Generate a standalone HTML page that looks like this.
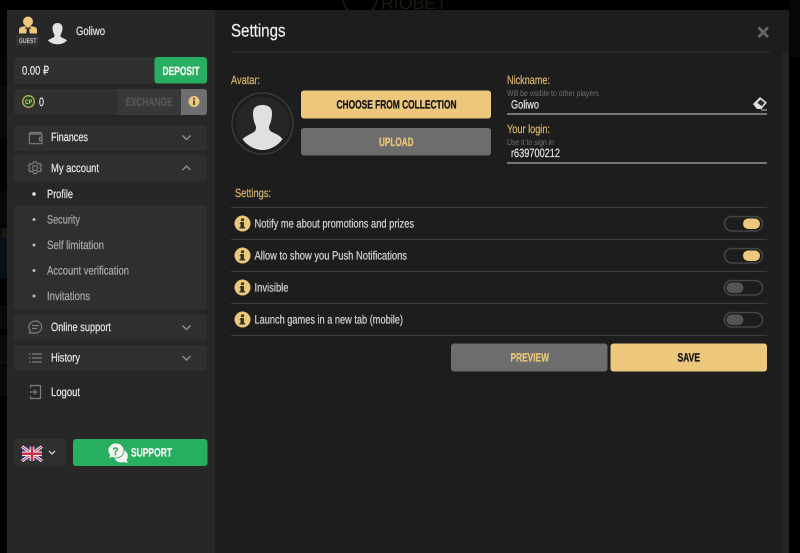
<!DOCTYPE html>
<html><head><meta charset="utf-8"><title>Settings</title>
<style>
html,body{margin:0;padding:0;background:#000;width:800px;height:553px;overflow:hidden}
svg{display:block;position:absolute;left:0;top:0}
text{font-family:"Liberation Sans",sans-serif;font-size:12px;text-rendering:geometricPrecision;stroke-width:.22px}
.m{fill:#e4e4e4;stroke:#e4e4e4;font-size:12px}
.b{font-weight:700;stroke-width:.3px}
.g{fill:#d9b56c;stroke:#d9b56c}
.s{fill:#707070;font-size:8.5px}
.l{fill:#a8a8a8;stroke:#a8a8a8;font-size:12px}
.r{fill:#d4d4d4;stroke:#d4d4d4;font-size:12px}
</style></head><body>
<svg width="800" height="553" viewBox="0 0 800 553" xmlns="http://www.w3.org/2000/svg">
<rect width="800" height="553" fill="#000"/>
<!-- dim background -->
<rect x="0" y="57" width="7" height="25" fill="#050505"/>
<rect x="0" y="85" width="7" height="52" fill="#070707"/>
<rect x="0" y="188" width="7" height="40" fill="#060606"/>
<rect x="0" y="228" width="7" height="50" fill="#07101a"/>
<rect x="2" y="228" width="5" height="10" fill="#1a170c"/>
<rect x="0" y="305" width="7" height="24" fill="#090909"/>
<rect x="0" y="335" width="7" height="30" fill="#0b0b0b"/>
<rect x="0" y="366" width="7" height="30" fill="#080808"/>
<rect x="789" y="0" width="11" height="57" fill="#070707"/>
<g fill="none" stroke="#14201a" stroke-width="1.500"><circle cx="360" cy="-2" r="17"/></g>
<text x="381" y="9" style="font-size:17px;stroke:none" fill="#1d1a10" textLength="66" lengthAdjust="spacingAndGlyphs">RIOBET</text>

<!-- panel -->
<rect x="7" y="10" width="208" height="543" fill="#272727"/>
<rect x="215" y="10" width="574" height="543" fill="#1d1d1d"/>
<rect x="782" y="52" width="7" height="501" fill="#232323"/>

<!-- guest icon -->
<circle cx="28" cy="21.500" r="5" fill="#ecc77c"/>
<path d="M19 33.500v-4c0-1.800 2-2.700 5.500-3.200h7c3.500.5 5.500 1.400 5.500 3.200v4z" fill="#ecc77c"/>
<path d="M25.500 26.800l2.500 1.200 2.500-1.200v2.600l-1.500-.6.7 4.700h-3.400l.7-4.700-1.500.6z" fill="#272727"/>
<rect x="16" y="35" width="23" height="11" rx="2" fill="#333"/>
<text x="19" y="43" style="font-size:7px;font-weight:700;stroke:none" fill="#c4c4c4" textLength="17.500" lengthAdjust="spacingAndGlyphs">GUEST</text>
<!-- avatar small -->
<path d="M57.500 23c3.300 0 5 2.300 5 5 0 2.500-.8 5-1.800 6.500-.5 1.300-.2 2.400 1 3 2 1 4 1.500 5.300 3-2.300 2.500-5.800 3.800-9.500 3.800s-7.200-1.300-9.500-3.800c1.300-1.500 3.300-2 5.300-3 1.200-.6 1.500-1.700 1-3-1-1.500-1.800-4-1.800-6.500 0-2.700 1.700-5 5-5z" fill="#e2e2e2"/>
<text x="76" y="35" class="m" textLength="29" lengthAdjust="spacingAndGlyphs">Goliwo</text>

<!-- balance -->
<rect x="14" y="57" width="193" height="26.500" rx="3" fill="#303030"/>
<path d="M157.500 57H204a3 3 0 0 1 3 3v20.500a3 3 0 0 1-3 3h-46.500a3 3 0 0 1-3-3V60a3 3 0 0 1 3-3z" fill="#27ae60"/>
<text x="22" y="74.500" class="m" textLength="27" lengthAdjust="spacingAndGlyphs">0.00 ₽</text>
<text x="162.500" y="75" class="b" fill="#f2f2f2" stroke="#f2f2f2" textLength="37" lengthAdjust="spacingAndGlyphs">DEPOSIT</text>

<!-- cp -->
<rect x="14" y="89" width="193" height="26" rx="3" fill="#303030"/>
<circle cx="28.500" cy="101.500" r="5.800" fill="#1c4a22" stroke="#c9a95a" stroke-width="1.300"/>
<text x="25" y="104" style="font-size:6.500px;font-weight:700;stroke:none" fill="#e6d27a" textLength="7" lengthAdjust="spacingAndGlyphs">CP</text>
<text x="39" y="106" class="m" textLength="5" lengthAdjust="spacingAndGlyphs">0</text>
<rect x="117.500" y="89" width="64" height="26" rx="2" fill="#383838"/>
<text x="125.500" y="106" class="b" fill="#565656" stroke="#565656" textLength="47" lengthAdjust="spacingAndGlyphs">EXCHANGE</text>
<path d="M181 89h23a3 3 0 0 1 3 3v20a3 3 0 0 1-3 3h-23z" fill="#6e6e6e"/>
<circle cx="194" cy="101.500" r="5.500" fill="#ecc77c"/>
<rect x="193" y="100.500" width="2" height="4.500" fill="#5a5040"/><rect x="193" y="97.800" width="2" height="1.800" fill="#5a5040"/>

<!-- Finances -->
<rect x="14" y="125" width="193" height="26" rx="3" fill="#2f2f2f"/>
<g fill="none" stroke="#7c7c7c" stroke-width="1.200">
<path d="M41 134v-1.500H31c-1 0-1.700.7-1.700 1.700V142c0 1 .7 1.700 1.700 1.700h10c.6 0 1-.4 1-1v-8c0-.4-.4-.7-1-.7H30"/>
<path d="M42 137.500h-2.500v3H42"/>
</g>
<text x="51" y="141" class="m" textLength="37" lengthAdjust="spacingAndGlyphs">Finances</text>
<path d="M182.500 135.500l4 4 4-4" fill="none" stroke="#8c8c8c" stroke-width="1.500"/>

<!-- My account -->
<rect x="14" y="155" width="193" height="26" rx="3" fill="#2f2f2f"/>
<g fill="none" stroke="#7c7c7c" stroke-width="1.200">
<circle cx="35" cy="168" r="2.500"/>
<path d="M33.600 161.800h2.800l.5 1.700 1.500.7 1.600-.8 1.500 2.300-1.300 1.100v1.600l1.300 1.200-1.500 2.300-1.600-.8-1.500.7-.5 1.800h-2.800l-.5-1.800-1.500-.7-1.600.8-1.500-2.300 1.300-1.200v-1.600l-1.300-1.100 1.500-2.300 1.600.8 1.500-.7z"/>
</g>
<text x="51" y="172" class="m" textLength="48" lengthAdjust="spacingAndGlyphs">My account</text>
<path d="M182.500 170l4-4 4 4" fill="none" stroke="#8c8c8c" stroke-width="1.500"/>

<!-- Profile -->
<circle cx="34" cy="194" r="1.700" fill="#f0f0f0"/>
<text x="47" y="198" class="m" textLength="26" lengthAdjust="spacingAndGlyphs">Profile</text>

<!-- sub -->
<rect x="14" y="205" width="193" height="104.500" rx="3" fill="#2f2f2f"/>
<g fill="#bdbdbd">
<circle cx="34" cy="219.500" r="1.500"/><circle cx="34" cy="245" r="1.500"/><circle cx="34" cy="270.500" r="1.500"/><circle cx="34" cy="296" r="1.500"/>
</g>
<text x="47" y="223.500" class="l" textLength="33" lengthAdjust="spacingAndGlyphs">Security</text>
<text x="47" y="249" class="l" textLength="57" lengthAdjust="spacingAndGlyphs">Self limitation</text>
<text x="47" y="274.500" class="l" textLength="82" lengthAdjust="spacingAndGlyphs">Account verification</text>
<text x="47" y="300" class="l" textLength="43" lengthAdjust="spacingAndGlyphs">Invitations</text>

<!-- Online support -->
<rect x="14" y="314.500" width="193" height="26" rx="3" fill="#2f2f2f"/>
<g fill="none" stroke="#7c7c7c" stroke-width="1.200">
<path d="M35.500 321c3.500 0 6.200 2.700 6.200 6s-2.700 6-6.200 6h-6.200l1.200-2.200c-1.200-1-1.700-2.400-1.700-3.800 0-3.300 3.200-6 6.700-6z"/>
<path d="M32 325.500h7M32 328.500h5"/>
</g>
<text x="51" y="331" class="m" textLength="60" lengthAdjust="spacingAndGlyphs">Online support</text>
<path d="M182.500 325.500l4 4 4-4" fill="none" stroke="#8c8c8c" stroke-width="1.500"/>

<!-- History -->
<rect x="14" y="345" width="193" height="26" rx="3" fill="#2f2f2f"/>
<g fill="none" stroke="#7c7c7c" stroke-width="1.200">
<path d="M32 354h10M32 358h10M32 362h10M29 354h1.500M29 358h1.500M29 362h1.500"/>
</g>
<text x="51" y="361.500" class="m" textLength="29" lengthAdjust="spacingAndGlyphs">History</text>
<path d="M182.500 356l4 4 4-4" fill="none" stroke="#8c8c8c" stroke-width="1.500"/>

<!-- Logout -->
<g fill="none" stroke="#7c7c7c" stroke-width="1.200">
<path d="M30.500 388v-2.500h10v13h-10V396"/>
<path d="M30 392h6.500M34 389.500l2.500 2.500-2.500 2.500"/>
</g>
<text x="51" y="396" class="m" textLength="29" lengthAdjust="spacingAndGlyphs">Logout</text>

<!-- Language -->
<rect x="14" y="439" width="52.500" height="27" rx="3" fill="#2f2f2f"/>
<g>
<rect x="22" y="446.500" width="20" height="14.500" fill="#2a3a78"/>
<path d="M22 446.500l20 14.500M42 446.500l-20 14.500" stroke="#f0e6e6" stroke-width="3"/>
<path d="M22 446.500l20 14.500M42 446.500l-20 14.500" stroke="#c8324a" stroke-width="1"/>
<path d="M32 446.500v14.500M22 453.750h20" stroke="#f0e6e6" stroke-width="4.500"/>
<path d="M32 446.500v14.500M22 453.750h20" stroke="#c8324a" stroke-width="2.500"/>
</g>
<path d="M49 451l3 3 3-3" fill="none" stroke="#cfcfcf" stroke-width="1.300"/>

<!-- Support -->
<rect x="73" y="439" width="134.500" height="27" rx="3" fill="#27ae60"/>
<path d="M121 449.500c3.500 0 6.800 2.800 6.800 6.500 0 1.500-.5 2.800-1.300 3.800l1.300 3.200-4.500-1c-1 .3-1.500.4-2.500.4-3.500 0-6.500-2.500-6.500-6s3-6.900 6.700-6.900z" fill="#f4f4f4"/>
<path d="M116 443c4.600 0 8 3.300 8 7.500s-3.400 7.500-8 7.500c-1.300 0-2.400-.2-3.400-.7l-4.100 1.200 1.300-3.500c-1.200-1.300-1.800-2.800-1.800-4.500 0-4.200 3.400-7.500 8-7.500z" fill="#f4f4f4" stroke="#27ae60" stroke-width=".8"/>
<text x="112.500" y="455" style="font-size:11px;font-weight:700;stroke:#27ae60" fill="#27ae60" textLength="6" lengthAdjust="spacingAndGlyphs">?</text>
<text x="131" y="456.500" class="b" fill="#f2f2f2" stroke="#f2f2f2" textLength="41" lengthAdjust="spacingAndGlyphs">SUPPORT</text>

<!-- header -->
<text x="231" y="36.500" style="font-size:18px" fill="#ececec" stroke="#ececec" textLength="54.500" lengthAdjust="spacingAndGlyphs">Settings</text>
<rect x="231" y="51.500" width="539" height="1" fill="#333"/>
<path d="M758.500 27.500l9.500 9.500M768 27.500l-9.500 9.500" stroke="#666" stroke-width="2.800"/>

<!-- Avatar -->
<text x="231" y="84" class="g" textLength="29" lengthAdjust="spacingAndGlyphs">Avatar:</text>
<circle cx="262.500" cy="123.500" r="30.500" fill="#1d1d1d" stroke="#3a3a3a" stroke-width="1.500"/>
<circle cx="262.500" cy="123.500" r="27" fill="#262626"/>
<path d="M262.500 105c5 0 9.500 2 9.500 8 0 4.500-1 9.500-2.500 12-1 2-.5 5 1.500 6.500 3.500 2 8 3 11.500 7.500-4 6-12 11-20 11s-16-5-20-11c3.500-3 8-5 11.500-7 2-1.500 2.500-4.500 1.500-7-1.500-2.500-2.500-7.500-2.500-12 0-6 4.500-8 9.500-8z" fill="#e0e0e0"/>
<rect x="301" y="90.500" width="190" height="28" rx="3" fill="#ecc77c"/>
<text x="336.500" y="108.500" class="b" fill="#141414" stroke="#141414" textLength="120" lengthAdjust="spacingAndGlyphs">CHOOSE FROM COLLECTION</text>
<rect x="301" y="128" width="190" height="27.500" rx="3" fill="#6d6d6d"/>
<text x="379" y="145.800" class="b" fill="#e8c47a" stroke="#e8c47a" textLength="34.500" lengthAdjust="spacingAndGlyphs">UPLOAD</text>

<!-- fields -->
<text x="507" y="84" class="g" textLength="43" lengthAdjust="spacingAndGlyphs">Nickname:</text>
<text x="507" y="96" class="s" textLength="92" lengthAdjust="spacingAndGlyphs">Will be visible to other players</text>
<text x="511" y="108.500" class="m" textLength="28" lengthAdjust="spacingAndGlyphs">Goliwo</text>
<rect x="507" y="113" width="260" height="2" fill="#777"/>
<path d="M753 104l7-7 7 5.500-5.500 6.500h-4.500z" fill="#e0e0e0"/>
<path d="M760.500 99.500l4.300 3.300-3 3.500-4.500-3.500z" fill="#2c2c2c"/>
<rect x="761" y="109.500" width="6" height="1" fill="#bdbdbd"/>
<text x="507" y="133" class="g" textLength="43" lengthAdjust="spacingAndGlyphs">Your login:</text>
<text x="507" y="145" class="s" textLength="47" lengthAdjust="spacingAndGlyphs">Use it to sign in</text>
<text x="511" y="157" class="m" textLength="49" lengthAdjust="spacingAndGlyphs">r639700212</text>
<rect x="507" y="162" width="260" height="2" fill="#777"/>

<!-- settings list -->
<text x="235" y="197" class="g" textLength="36" lengthAdjust="spacingAndGlyphs">Settings:</text>
<g fill="#3e3e3e">
<rect x="231" y="207" width="536" height="1"/><rect x="231" y="239" width="536" height="1"/><rect x="231" y="271" width="536" height="1"/><rect x="231" y="303" width="536" height="1"/><rect x="231" y="335" width="536" height="1"/>
</g>
<g fill="#ecc77c"><circle cx="242.500" cy="223.500" r="8"/><circle cx="242.500" cy="255.500" r="8"/><circle cx="242.500" cy="287.500" r="8"/><circle cx="242.500" cy="319.500" r="8"/></g>
<g fill="#33301f">
<path d="M241 218.500h3v2.500h-3zM240.500 222h3.500v5h1v1.500h-5.500V227h1v-3.500h-1z"/>
<path d="M241 250.500h3v2.500h-3zM240.500 254h3.500v5h1v1.500h-5.500V259h1v-3.500h-1z"/>
<path d="M241 282.500h3v2.500h-3zM240.500 286h3.500v5h1v1.500h-5.500V291h1v-3.500h-1z"/>
<path d="M241 314.500h3v2.500h-3zM240.500 318h3.500v5h1v1.500h-5.500V323h1v-3.500h-1z"/>
</g>
<text x="254.500" y="227.500" class="r" textLength="159.500" lengthAdjust="spacingAndGlyphs">Notify me about promotions and prizes</text>
<text x="254.500" y="259.500" class="r" textLength="152.500" lengthAdjust="spacingAndGlyphs">Allow to show you Push Notifications</text>
<text x="254.500" y="291.500" class="r" textLength="34" lengthAdjust="spacingAndGlyphs">Invisible</text>
<text x="254.500" y="323.500" class="r" textLength="148.500" lengthAdjust="spacingAndGlyphs">Launch games in a new tab (mobile)</text>

<!-- toggles -->
<g fill="none" stroke="#454545" stroke-width="1.500">
<rect x="724.500" y="216.500" width="38" height="14.500" rx="7.250"/>
<rect x="724.500" y="248.500" width="38" height="14.500" rx="7.250"/>
<rect x="724.500" y="280.500" width="38" height="14.500" rx="7.250"/>
<rect x="724.500" y="312.500" width="38" height="14.500" rx="7.250"/>
</g>
<rect x="743" y="218.500" width="17" height="10.500" rx="5.250" fill="#ecc77c"/>
<rect x="743" y="250.500" width="17" height="10.500" rx="5.250" fill="#ecc77c"/>
<rect x="726.500" y="282.500" width="17" height="10.500" rx="5.250" fill="#555"/>
<rect x="726.500" y="314.500" width="17" height="10.500" rx="5.250" fill="#555"/>

<!-- actions -->
<rect x="451" y="343.500" width="156.500" height="28" rx="3" fill="#6d6d6d"/>
<text x="510.500" y="361.500" class="b" fill="#e8c47a" stroke="#e8c47a" textLength="38.500" lengthAdjust="spacingAndGlyphs">PREVIEW</text>
<rect x="610.500" y="343.500" width="156.500" height="28" rx="3" fill="#ecc77c"/>
<text x="677.500" y="361.500" class="b" fill="#141414" stroke="#141414" textLength="22.500" lengthAdjust="spacingAndGlyphs">SAVE</text>
</svg>
</body></html>
